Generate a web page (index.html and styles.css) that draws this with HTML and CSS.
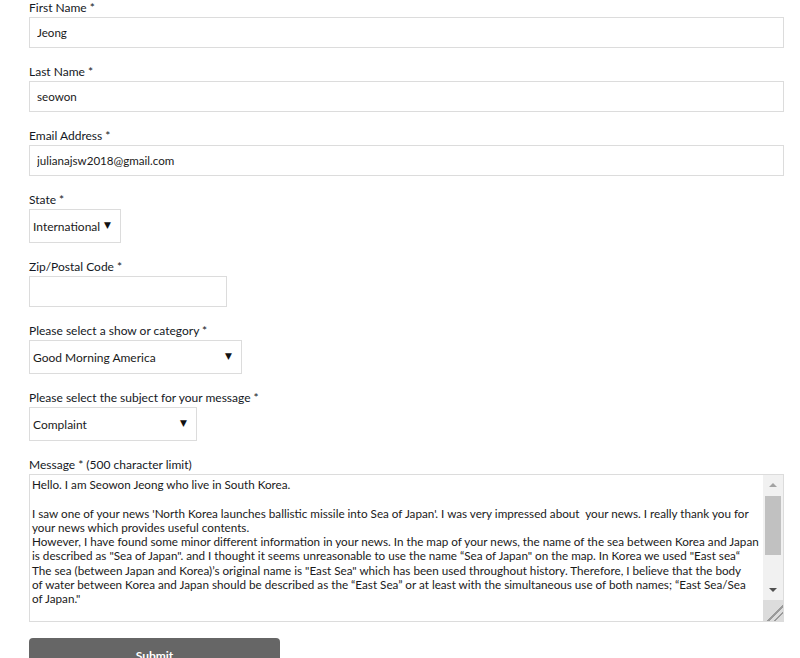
FILE: index.html
```html
<!DOCTYPE html>
<html lang="en">
<head>
    <meta charset="UTF-8">
    <meta name="viewport" content="width=device-width, initial-scale=1.0">
    <title>Contact Us</title>
    <link rel="stylesheet" href="styles.css">
</head>
<body>
    <form class="contact-form">
        <div class="form-group">
            <label for="first-name">First Name *</label>
            <input type="text" id="first-name" name="first-name" value="Jeong">
        </div>
        <div class="form-group">
            <label for="last-name">Last Name *</label>
            <input type="text" id="last-name" name="last-name" value="seowon">
        </div>
        <div class="form-group">
            <label for="email">Email Address *</label>
            <input type="email" id="email" name="email" value="julianajsw2018@gmail.com">
        </div>
        <div class="form-group">
            <label for="state">State *</label>
            <div class="select select-state">
                <select id="state" name="state">
                    <option>International</option>
                </select>
            </div>
        </div>
        <div class="form-group">
            <label for="zip">Zip/Postal Code *</label>
            <input type="text" id="zip" name="zip" class="input-zip">
        </div>
        <div class="form-group">
            <label for="show">Please select a show or category *</label>
            <div class="select select-show">
                <select id="show" name="show">
                    <option>Good Morning America</option>
                </select>
            </div>
        </div>
        <div class="form-group">
            <label for="subject">Please select the subject for your message *</label>
            <div class="select select-subject">
                <select id="subject" name="subject">
                    <option>Complaint</option>
                </select>
            </div>
        </div>
        <div class="form-group">
            <label for="message">Message * (500 character limit)</label>
            <div class="message-box">
                <textarea id="message" name="message" spellcheck="false">Hello. I am Seowon Jeong who live in South Korea.

I saw one of your news 'North Korea launches ballistic missile into Sea of Japan'. I was very impressed about  your news. I really thank you for your news which provides useful contents.
However, I have found some minor different information in your news. In the map of your news, the name of the sea between Korea and Japan is described as "Sea of Japan". and I thought it seems unreasonable to use the name “Sea of Japan" on the map. In Korea we used "East sea“ The sea (between Japan and Korea)’s original name is "East Sea" which has been used throughout history. Therefore, I believe that the body of&nbsp;water between Korea and Japan should be described as the “East Sea” or at least with the simultaneous use of both names; “East Sea/Sea of&nbsp;Japan."</textarea>
                <!-- drawn scrollbar, the headless browser hides the real one -->
                <div class="scrollbar" aria-hidden="true">
                    <span class="sb-btn sb-up"></span>
                    <span class="sb-track"><span class="sb-thumb"></span></span>
                    <span class="sb-btn sb-down"></span>
                    <span class="sb-corner"></span>
                </div>
            </div>
        </div>
        <button type="submit">Submit</button>
    </form>
</body>
</html>
```
FILE: styles.css
```css
 * {
     box-sizing: border-box;
     margin: 0;
     padding: 0;
 }

 body {
     font-family: 'Lato', 'Liberation Sans', sans-serif;
     background-color: #ffffff;
     color: #1a1a1a;
 }

.contact-form {
     padding: 0 16px 0 29px;
 }

.form-group {
     margin-bottom: 16px;
 }

 label {
     display: block;
     font-size: 12px;
     line-height: 16px;
     margin-bottom: 1px;
     color: #141824;
 }

 input[type="text"],
 input[type="email"] {
     display: block;
     width: 100%;
     height: 31px;
     padding: 0 7px;
     border: 1px solid #dcdcdc;
     font-family: inherit;
     font-size: 11.6px;
     color: #1a1a1a;
     outline: none;
 }

 input.input-zip {
     width: 198px;
 }

/* custom dropdowns: native select with the arrow drawn on top */
.select {
     position: relative;
     height: 34px;
 }

.select::after {
     content: "\25BC";
     position: absolute;
     top: 10px;
     right: 10px;
     font-family: 'DejaVu Sans', sans-serif;
     font-size: 9px;
     line-height: 12px;
     color: #111;
     pointer-events: none;
 }

.select select {
     appearance: none;
     -webkit-appearance: none;
     width: 100%;
     height: 34px;
     padding: 0 20px 0 3px;
     border: 1px solid #dcdcdc;
     border-radius: 0;
     background-color: #fff;
     font-family: inherit;
     font-size: 12px;
     color: #1a1a1a;
     outline: none;
 }

.select-state {
     width: 92px;
 }

.select-show {
     width: 213px;
 }

.select-subject {
     width: 168px;
 }

/* message box */
.message-box {
     display: flex;
     height: 148px;
     border: 1px solid #dcdcdc;
 }

 textarea {
     flex: 1;
     min-width: 0;
     padding: 2px;
     border: none;
     resize: none;
     overflow: hidden;
     font-family: inherit;
     font-size: 11.7px;
     line-height: 14.3px;
     color: #1a1a1a;
     outline: none;
 }

.scrollbar {
     display: flex;
     flex-direction: column;
     width: 20px;
     background-color: #f1f1f1;
 }

.sb-btn {
     display: flex;
     align-items: center;
     justify-content: center;
     height: 20px;
 }

.sb-btn::before {
     content: "";
     border-left: 4px solid transparent;
     border-right: 4px solid transparent;
 }

.sb-up::before {
     border-bottom: 4px solid #a3a3a3;
 }

.sb-down::before {
     border-top: 4px solid #505050;
 }

.sb-track {
     flex: 1;
     padding: 1px 2px 0;
 }

.sb-thumb {
     display: block;
     height: 59px;
     background-color: #c1c1c1;
 }

.sb-corner {
     height: 21px;
     background-color: #dcdcdc;
     background-image: linear-gradient(135deg, transparent 60%, #9a9a9a 60%, #9a9a9a 66%, transparent 66%, transparent 76%, #9a9a9a 76%, #9a9a9a 82%, transparent 82%);
 }

 button {
     display: block;
     width: 251px;
     height: 34px;
     background-color: #666666;
     color: #ffffff;
     border: none;
     border-radius: 4px;
     font-family: inherit;
     font-size: 12px;
     font-weight: 700;
     cursor: pointer;
 }
```
